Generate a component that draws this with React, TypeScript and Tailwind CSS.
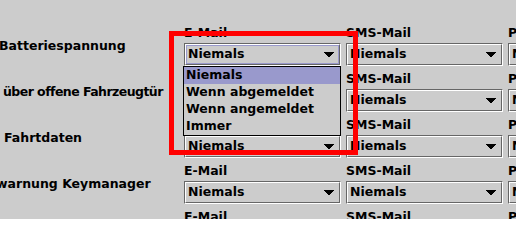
import React from 'react';

type Row = {
  label: string;
  labelClass: string;
  headers: string[];
};

const rows: Row[] = [
  { label: 'Batteriespannung', labelClass: '-ml-px', headers: ['E-Mail', 'SMS-Mail', 'Push'] },
  { label: 'über offene Fahrzeugtür', labelClass: 'ml-[3px] tracking-[-0.55px]', headers: ['E-Mail', 'SMS-Mail', 'Push'] },
  { label: 'Fahrtdaten', labelClass: 'ml-1', headers: ['E-Mail', 'SMS-Mail', 'Push'] },
  { label: 'warnung Keymanager', labelClass: '-ml-1', headers: ['E-Mail', 'SMS-Mail', 'Push'] },
  { label: 'Batteriewarnung', labelClass: '-ml-1', headers: ['E-Mail', 'SMS-Mail', 'Push'] },
];

const options = ['Niemals', 'Wenn abgemeldet', 'Wenn angemeldet', 'Immer'];

function Arrow() {
  // Metal style arrow: 10px wide, 5 rows
  return (
    <svg width="10" height="5" viewBox="0 0 10 5" shapeRendering="crispEdges" className="shrink-0">
      <rect x="0" y="0" width="10" height="1" fill="#000" />
      <rect x="1" y="1" width="8" height="1" fill="#000" />
      <rect x="2" y="2" width="6" height="1" fill="#000" />
      <rect x="3" y="3" width="4" height="1" fill="#000" />
      <rect x="4" y="4" width="2" height="1" fill="#000" />
    </svg>
  );
}

function Combo({ open = false }: { open?: boolean }) {
  return (
    <div className="relative mt-[2px]">
      <div className="h-[23px] border-t border-l border-r border-b border-t-[#666666] border-l-[#666666] border-r-white border-b-white">
        <div className="h-full border-t border-l border-r border-b border-t-white border-l-white border-r-[#666666] border-b-[#666666]">
          <div
            className={
              open
                ? 'flex h-full items-center justify-between border border-[#9999cc] pl-px pr-[4px]'
                : 'flex h-full items-center justify-between pl-[2px] pr-[5px]'
            }
          >
            <span className="leading-none">Niemals</span>
            <Arrow />
          </div>
        </div>
      </div>
      {open && (
        <ul className="absolute top-full -left-px z-10 w-[158px] border border-black bg-[#cccccc]">
          {options.map((o, i) => (
            <li
              key={o}
              className={
                i === 0
                  ? 'flex h-[17px] items-center bg-[#9999cc] pl-[2px] leading-none'
                  : 'flex h-[17px] items-center pl-[2px] leading-none'
              }
            >
              {o}
            </li>
          ))}
        </ul>
      )}
    </div>
  );
}

export default function App() {
  return (
    <div className="relative h-[219px] w-[516px] overflow-hidden bg-[#cccccc] font-['DejaVu_Sans',sans-serif] text-[12.5px] font-bold text-black">
      <div className="flex flex-col pt-[25px]">
        {rows.map((row, r) => (
          <div key={r} className="flex h-[46px] shrink-0">
            <div className="flex h-[41px] w-[184px] shrink-0 items-center overflow-hidden whitespace-nowrap pt-[2px]">
              <span className={row.labelClass}>{row.label}</span>
            </div>
            <div className="flex gap-[5px]">
              {row.headers.map((h, c) => (
                <div key={c} className="w-[157px] shrink-0">
                  <div className="h-4 overflow-hidden whitespace-nowrap leading-4">{h}</div>
                  <Combo open={r === 0 && c === 0} />
                </div>
              ))}
            </div>
          </div>
        ))}
      </div>

      {/* annotation frame */}
      <div className="pointer-events-none absolute top-[31px] left-[169px] h-[124px] w-[189px] border-[5px] border-[#ff0000]" />
    </div>
  );
}
